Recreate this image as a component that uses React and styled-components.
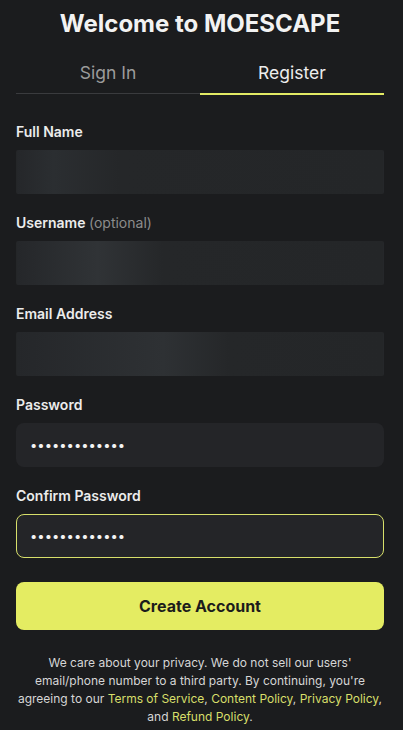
import React from 'react';
import styled, {createGlobalStyle} from 'styled-components';

const Global = createGlobalStyle`
  html, body {
    margin: 0;
    padding: 0;
    background: #1b1c1e;
  }
  body {
    font-family: Inter, "Noto Sans", sans-serif;
    -webkit-font-smoothing: antialiased;
  }
`;

const Page = styled.div`
  width: 403px;
  min-height: 730px;
  box-sizing: border-box;
  padding: 8px 19px 0 16px;
  background: #1b1c1e;
  color: #ececec;
`;

const Title = styled.h1`
  margin: 0;
  font-size: 24px;
  line-height: 32px;
  font-weight: 700;
  text-align: center;
  color: #f2f2f2;
`;

const Tabs = styled.div`
  display: grid;
  grid-template-columns: 1fr 1fr;
  margin-top: 21px;
`;

const Tab = styled.div`
  text-align: center;
  font-size: 17.5px;
  line-height: 24px;
  padding-bottom: 8px;
  color: ${p => (p.active ? '#ededed' : '#9b9b9b')};
  border-bottom: ${p => (p.active ? '2px solid #e2ea64' : '1px solid #3a3b3e')};
  margin-bottom: ${p => (p.active ? '0' : '1px')};
`;

const Form = styled.div`
  display: flex;
  flex-direction: column;
  gap: 19px;
  margin-top: 27px;
`;

const Field = styled.div`
  display: flex;
  flex-direction: column;
  gap: 8px;
`;

const Label = styled.label`
  font-size: 14px;
  line-height: 20px;
  font-weight: 600;
  color: #ececec;
`;

const Hint = styled.span`
  font-weight: 400;
  color: #8c8c8c;
`;

const Input = styled.div`
  height: 44px;
  box-sizing: border-box;
  border-radius: ${p => (p.blurred ? '2px' : '8px')};
  border: 1px solid ${p => (p.focused ? '#d7df6a' : 'transparent')};
  background: ${p =>
    p.blurred
      ? `linear-gradient(90deg, #25272a 0%, ${p.glow} ${p.at}%, #252729 ${p.at + 18}%, #242628 100%)`
      : '#242528'};
  display: flex;
  align-items: center;
  padding: 0 13px;
  color: #f4f4f4;
  font-size: 13px;
  letter-spacing: 0;
`;

const Button = styled.button`
  margin-top: 24px;
  width: 100%;
  height: 48px;
  border: none;
  border-radius: 8px;
  background: #e4ec62;
  color: #1c1c1c;
  font-family: Inter, "Noto Sans", sans-serif;
  font-size: 16px;
  font-weight: 700;
`;

const Notice = styled.p`
  margin: 24px 0 0;
  text-align: center;
  font-size: 12px;
  line-height: 18px;
  color: #d6d6d6;
`;

const Link = styled.a`
  color: #d7df6a;
  text-decoration: none;
`;

export default function App() {
  return (
    <Page>
      <Global />
      <Title>Welcome to MOESCAPE</Title>
      <Tabs>
        <Tab>Sign In</Tab>
        <Tab active>Register</Tab>
      </Tabs>
      <Form>
        <Field>
          <Label>Full Name</Label>
          <Input blurred glow="#2b2e31" at={10} />
        </Field>
        <Field>
          <Label>Username <Hint>(optional)</Hint></Label>
          <Input blurred glow="#303336" at={22} />
        </Field>
        <Field>
          <Label>Email Address</Label>
          <Input blurred glow="#2e3134" at={40} />
        </Field>
        <Field>
          <Label>Password</Label>
          <Input>•••••••••••••</Input>
        </Field>
        <Field>
          <Label>Confirm Password</Label>
          <Input focused>•••••••••••••</Input>
        </Field>
      </Form>
      <Button>Create Account</Button>
      <Notice>
        We care about your privacy. We do not sell our users' email/phone number to a third party. By continuing, you're agreeing to our{' '}
        <Link>Terms of Service</Link>, <Link>Content Policy</Link>, <Link>Privacy Policy</Link>, and <Link>Refund Policy</Link>.
      </Notice>
    </Page>
  );
}
